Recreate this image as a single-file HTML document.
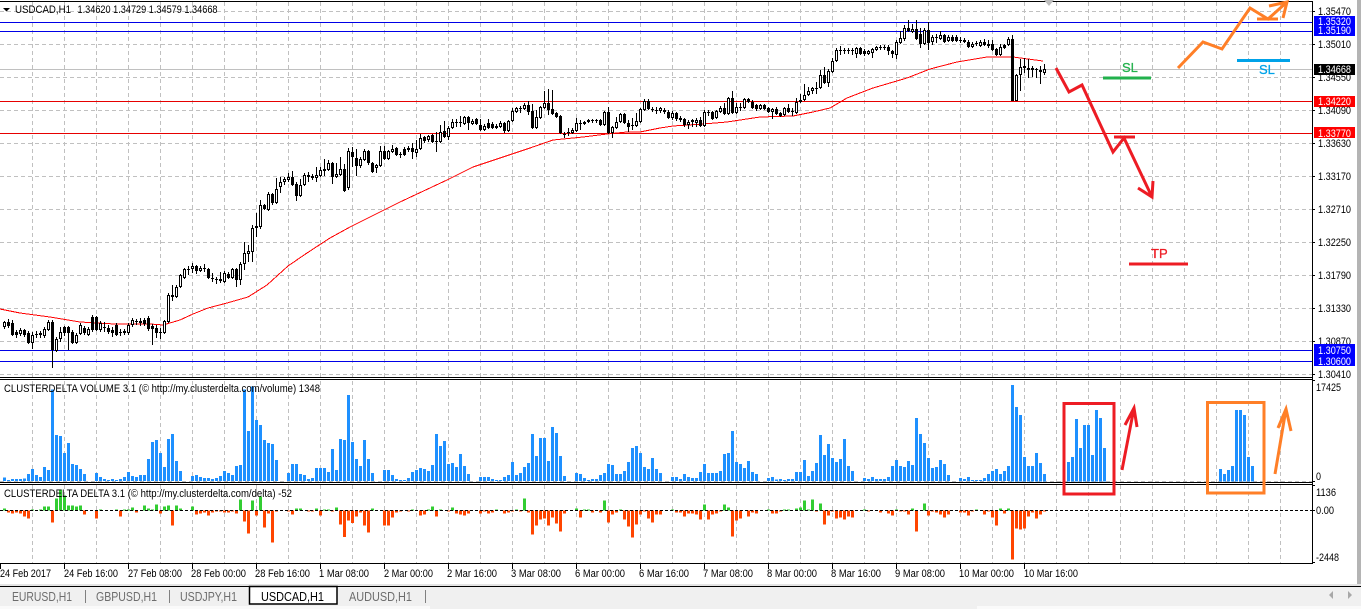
<!DOCTYPE html>
<html><head><meta charset="utf-8"><title>USDCAD,H1</title>
<style>html,body{margin:0;padding:0;background:#fff;width:1361px;height:609px;overflow:hidden}svg{display:block}text{font-family:"Liberation Sans",sans-serif;font-size:11px;fill:#000}.s{font-size:12.5px;fill:#6d6d6d}.w{fill:#fff}</style></head><body>
<svg width="1361" height="609" viewBox="0 0 1361 609" xmlns="http://www.w3.org/2000/svg">
<rect width="1361" height="609" fill="#fff"/>
<rect x="1357" y="0" width="4" height="585" fill="#b4b4b4"/>
<rect x="0" y="584" width="1361" height="2" fill="#e4e4e4"/>
<rect x="0" y="587" width="1361" height="20" fill="#f0f0f0"/>
<rect x="0" y="606" width="430" height="3" fill="#fafafa"/><rect x="430" y="606" width="547" height="3" fill="#f0f0f0"/><rect x="977" y="606" width="384" height="3" fill="#fafafa"/>
<g shape-rendering="crispEdges">
<path fill="none" stroke="#c0c0c0" stroke-dasharray="4 3" d="M32.5 2V378M64.5 2V378M96.5 2V378M128.5 2V378M160.5 2V378M192.5 2V378M224.5 2V378M256.5 2V378M288.5 2V378M320.5 2V378M352.5 2V378M384.5 2V378M416.5 2V378M448.5 2V378M480.5 2V378M512.5 2V378M544.5 2V378M576.5 2V378M608.5 2V378M640.5 2V378M672.5 2V378M704.5 2V378M736.5 2V378M768.5 2V378M800.5 2V378M832.5 2V378M864.5 2V378M896.5 2V378M928.5 2V378M960.5 2V378M992.5 2V378M1024.5 2V378M1056.5 2V378M1088.5 2V378M1120.5 2V378M1152.5 2V378M1184.5 2V378M1216.5 2V378M1248.5 2V378M1280.5 2V378
M32.5 381V482M64.5 381V482M96.5 381V482M128.5 381V482M160.5 381V482M192.5 381V482M224.5 381V482M256.5 381V482M288.5 381V482M320.5 381V482M352.5 381V482M384.5 381V482M416.5 381V482M448.5 381V482M480.5 381V482M512.5 381V482M544.5 381V482M576.5 381V482M608.5 381V482M640.5 381V482M672.5 381V482M704.5 381V482M736.5 381V482M768.5 381V482M800.5 381V482M832.5 381V482M864.5 381V482M896.5 381V482M928.5 381V482M960.5 381V482M992.5 381V482M1024.5 381V482M1056.5 381V482M1088.5 381V482M1120.5 381V482M1152.5 381V482M1184.5 381V482M1216.5 381V482M1248.5 381V482M1280.5 381V482
M32.5 485V563M64.5 485V563M96.5 485V563M128.5 485V563M160.5 485V563M192.5 485V563M224.5 485V563M256.5 485V563M288.5 485V563M320.5 485V563M352.5 485V563M384.5 485V563M416.5 485V563M448.5 485V563M480.5 485V563M512.5 485V563M544.5 485V563M576.5 485V563M608.5 485V563M640.5 485V563M672.5 485V563M704.5 485V563M736.5 485V563M768.5 485V563M800.5 485V563M832.5 485V563M864.5 485V563M896.5 485V563M928.5 485V563M960.5 485V563M992.5 485V563M1024.5 485V563M1056.5 485V563M1088.5 485V563M1120.5 485V563M1152.5 485V563M1184.5 485V563M1216.5 485V563M1248.5 485V563M1280.5 485V563
M0 11.5H1312M0 44.5H1312M0 77.5H1312M0 110.5H1312M0 143.5H1312M0 176.5H1312M0 209.5H1312M0 242.5H1312M0 275.5H1312M0 308.5H1312M0 341.5H1312M0 374.5H1312M0 481.5H1312"/>
<path fill="none" stroke="#c0c0c0" d="M0 69.5H1312"/>
<path fill="none" stroke="#0000e6" d="M0 22.5H1312M0 31.5H1312M0 350.5H1312M0 361.5H1312"/>
<path fill="none" stroke="#e60000" d="M0 101.5H1312M0 133.5H1312"/>
</g>
<path fill="none" stroke="#f00" stroke-width="1" shape-rendering="crispEdges" d="M0 309L20 313L50 317L80 322L115 324L150 324L163 325L180 320L193 314L208 308L227 303L248 297L267 285L288 266L307 253L330 238L350 227L400 202L447 180L473 167L503 157L530 148L553 140L583 137L607 134L627 132L640 132L660 128L673 126L703 124L727 122L760 117L793 116L813 112L830 108L847 98L873 88L907 78L930 69L957 62L987 57L1013 57L1043 61"/>
<g shape-rendering="crispEdges" fill="none">
<path stroke="#000" d="M4.5 321V329M8.5 319V328M12.5 320V336M16.5 330V338M20.5 328V336M24.5 329V337M28.5 331V344M32.5 332V349M36.5 331V338M40.5 331V338M44.5 327V338M48.5 320V331M52.5 320V368M56.5 337V352M60.5 327V342M64.5 326V336M68.5 326V350M72.5 330V344M76.5 333V344M80.5 323V335M84.5 326V335M88.5 327V336M92.5 315V332M96.5 316V331M100.5 321V332M104.5 322V332M108.5 325V334M112.5 327V337M116.5 323V336M120.5 329V336M124.5 329V335M128.5 323V335M132.5 318V327M136.5 319V325M140.5 318V326M144.5 318V326M148.5 316V331M152.5 324V345M156.5 325V338M160.5 328V339M164.5 320V334M168.5 293V323M172.5 285V301M176.5 285V298M180.5 274V288M184.5 268V279M188.5 266V275M192.5 263V273M196.5 265V274M200.5 266V272M204.5 264V272M208.5 268V279M212.5 273V282M216.5 277V284M220.5 272V283M224.5 271V283M228.5 272V279M232.5 268V279M236.5 268V287M240.5 262V285M244.5 242V270M248.5 245V262M252.5 225V262M256.5 213V237M260.5 200V229M264.5 204V210M268.5 192V211M272.5 193V205M276.5 178V204M280.5 177V193M284.5 177V185M288.5 173V182M292.5 171V186M296.5 182V201M300.5 179V197M304.5 173V186M308.5 172V182M312.5 174V180M316.5 167V182M320.5 167V177M324.5 159V176M328.5 160V171M332.5 162V184M336.5 163V178M340.5 157V176M344.5 164V192M348.5 148V190M352.5 147V167M356.5 149V176M360.5 157V168M364.5 149V161M368.5 150V165M372.5 162V173M376.5 164V173M380.5 146V167M384.5 146V160M388.5 150V160M392.5 145V153M396.5 147V156M400.5 152V158M404.5 147V156M408.5 146V152M412.5 143V159M416.5 140V157M420.5 134V150M424.5 136V143M428.5 135V142M432.5 134V143M436.5 132V152M440.5 125V143M444.5 121V138M448.5 126V140M452.5 119V129M456.5 119V127M460.5 116V127M464.5 116V125M468.5 116V130M472.5 119V125M476.5 118V125M480.5 119V131M484.5 124V131M488.5 119V129M492.5 122V129M496.5 124V129M500.5 121V128M504.5 122V133M508.5 120V132M512.5 108V122M516.5 107V113M520.5 106V113M524.5 103V110M528.5 101V115M532.5 104V129M536.5 110V129M540.5 106V119M544.5 91V109M548.5 89V115M552.5 90V115M556.5 112V118M560.5 115V134M564.5 132V138M568.5 128V136M572.5 128V134M576.5 118V132M580.5 120V130M584.5 121V125M588.5 119V123M592.5 119V123M596.5 119V123M600.5 119V126M604.5 111V126M608.5 107V134M612.5 126V138M616.5 117V129M620.5 113V123M624.5 113V124M628.5 120V132M632.5 118V130M636.5 113V127M640.5 108V123M644.5 99V111M648.5 99V110M652.5 107V112M656.5 107V114M660.5 107V113M664.5 108V114M668.5 110V119M672.5 111V120M676.5 112V121M680.5 116V122M684.5 118V127M688.5 120V129M692.5 119V127M696.5 118V127M700.5 117V127M704.5 110V127M708.5 110V116M712.5 111V120M716.5 110V119M720.5 106V113M724.5 103V115M728.5 97V115M732.5 91V114M736.5 103V114M740.5 103V111M744.5 98V109M748.5 98V103M752.5 100V109M756.5 104V111M760.5 104V110M764.5 104V110M768.5 107V113M772.5 108V119M776.5 107V115M780.5 112V117M784.5 107V116M788.5 104V113M792.5 108V116M796.5 98V114M800.5 94V103M804.5 84V101M808.5 87V96M812.5 87V94M816.5 82V94M820.5 70V89M824.5 67V84M828.5 69V87M832.5 58V73M836.5 48V62M840.5 46V55M844.5 48V54M848.5 48V54M852.5 48V55M856.5 47V58M860.5 47V55M864.5 49V56M868.5 50V55M872.5 48V58M876.5 46V51M880.5 45V50M884.5 45V50M888.5 45V55M892.5 50V58M896.5 40V59M900.5 31V44M904.5 25V41M908.5 20V32M912.5 24V33M916.5 20V40M920.5 28V48M924.5 28V45M928.5 22V50M932.5 35V45M936.5 34V43M940.5 31V40M944.5 34V43M948.5 35V42M952.5 35V42M956.5 35V42M960.5 37V43M964.5 38V43M968.5 40V48M972.5 42V48M976.5 41V46M980.5 40V47M984.5 39V46M988.5 40V48M992.5 40V51M996.5 48V56M1000.5 44V56M1004.5 44V49M1008.5 37V46M1012.5 35V101M1016.5 74V101M1020.5 59V91M1024.5 58V73M1028.5 59V78M1032.5 66V77M1036.5 68V78M1040.5 66V84M1044.5 64V75"/>
<path stroke="#000" stroke-width="3" d="M4.5 322V327M8.5 322V326M12.5 323V335M16.5 332V335M20.5 330V334M24.5 330V335M28.5 333V343M32.5 335V343M36.5 334V335M40.5 333V335M44.5 329V336M48.5 322V330M52.5 322V350M56.5 339V351M60.5 332V339M64.5 327V333M68.5 327V333M72.5 332V343M76.5 335V343M80.5 325V334M84.5 328V333M88.5 329V335M92.5 317V330M96.5 317V330M100.5 323V330M104.5 327V328M108.5 328V332M112.5 330V333M116.5 325V335M120.5 332V333M124.5 331V333M128.5 325V333M132.5 320V325M136.5 321V322M140.5 321V323M144.5 320V324M148.5 318V329M152.5 326V329M156.5 328V333M160.5 332V333M164.5 321V333M168.5 295V322M172.5 295V297M176.5 287V297M180.5 275V287M184.5 269V278M188.5 269V270M192.5 266V269M196.5 266V271M200.5 268V271M204.5 268V269M208.5 269V278M212.5 278V279M216.5 279V280M220.5 279V281M224.5 273V282M228.5 274V278M232.5 269V278M236.5 269V280M240.5 264V280M244.5 253V264M248.5 251V254M252.5 228V252M256.5 226V228M260.5 205V227M264.5 205V209M268.5 194V210M272.5 194V203M276.5 189V203M280.5 182V187M284.5 179V182M288.5 177V180M292.5 177V185M296.5 184V196M300.5 185V196M304.5 175V185M308.5 175V177M312.5 176V178M316.5 175V178M320.5 170V176M324.5 169V171M328.5 163V170M332.5 163V177M336.5 174V177M340.5 169V175M344.5 169V191M348.5 151V188M352.5 152V157M356.5 158V166M360.5 159V166M364.5 151V160M368.5 151V163M372.5 163V172M376.5 165V168M380.5 151V166M384.5 151V159M388.5 151V159M392.5 149V152M396.5 148V155M400.5 154V155M404.5 149V155M408.5 148V150M412.5 148V152M416.5 149V153M420.5 138V149M424.5 137V141M428.5 136V140M432.5 135V142M436.5 141V142M440.5 132V142M444.5 131V137M448.5 128V137M452.5 122V128M456.5 122V123M460.5 122V123M464.5 117V124M468.5 117V123M472.5 121V124M476.5 119V124M480.5 125V130M484.5 126V130M488.5 123V128M492.5 124V128M496.5 126V128M500.5 123V127M504.5 123V131M508.5 121V131M512.5 111V121M516.5 108V112M520.5 108V109M524.5 105V109M528.5 105V112M532.5 111V128M536.5 117V128M540.5 107V118M544.5 103V108M548.5 103V110M552.5 109V114M556.5 113V117M560.5 116V133M564.5 134V135M568.5 132V133M572.5 130V133M576.5 123V131M580.5 123V124M584.5 122V124M588.5 120V122M592.5 120V121M596.5 120V121M600.5 120V125M604.5 112V125M608.5 112V133M612.5 127V133M616.5 122V128M620.5 114V122M624.5 114V123M628.5 123V127M632.5 125V126M636.5 121V126M640.5 109V122M644.5 101V110M648.5 101V109M652.5 109V110M656.5 110V111M660.5 108V111M664.5 110V112M668.5 112V118M672.5 113V118M676.5 113V119M680.5 118V120M684.5 119V125M688.5 122V125M692.5 120V122M696.5 120V123M700.5 120V126M704.5 112V126M708.5 112V113M712.5 112V119M716.5 111V118M720.5 108V112M724.5 108V114M728.5 98V114M732.5 98V113M736.5 107V113M740.5 107V108M744.5 99V108M748.5 99V102M752.5 102V108M756.5 105V109M760.5 105V109M764.5 105V109M768.5 108V112M772.5 109V112M776.5 109V114M780.5 113V116M784.5 108V115M788.5 108V112M792.5 111V112M796.5 102V113M800.5 100V102M804.5 95V100M808.5 91V95M812.5 88V91M816.5 88V89M820.5 75V88M824.5 75V83M828.5 71V83M832.5 61V72M836.5 50V61M840.5 50V51M844.5 50V51M848.5 50V51M852.5 50V51M856.5 48V54M860.5 48V54M864.5 51V54M868.5 51V54M872.5 49V53M876.5 47V50M880.5 47V48M884.5 47V48M888.5 47V51M892.5 51V54M896.5 42V55M900.5 38V43M904.5 28V39M908.5 28V31M912.5 29V32M916.5 29V39M920.5 34V44M924.5 30V44M928.5 30V43M932.5 37V42M936.5 37V38M940.5 35V39M944.5 35V42M948.5 37V41M952.5 37V41M956.5 37V41M960.5 40V41M964.5 40V42M968.5 42V47M972.5 44V47M976.5 43V44M980.5 42V46M984.5 42V45M988.5 44V46M992.5 44V50M996.5 49V55M1000.5 47V55M1004.5 45V48M1008.5 39V45M1012.5 39V101M1016.5 75V101M1020.5 67V75M1024.5 66V68M1028.5 68V70M1032.5 68V70M1036.5 69V70M1040.5 70V72M1044.5 69V73"/>
<path stroke="#fff" d="M4.5 323V326M20.5 331V333M32.5 336V342M44.5 330V335M48.5 323V329M56.5 340V350M60.5 333V338M76.5 336V342M80.5 326V333M88.5 330V334M100.5 324V329M128.5 326V332M132.5 321V324M164.5 322V332M168.5 296V321M176.5 288V296M180.5 276V286M184.5 270V277M192.5 267V268M200.5 269V270M224.5 274V281M232.5 270V277M240.5 265V279M244.5 254V263M248.5 252V253M252.5 229V251M260.5 206V226M268.5 195V209M276.5 190V202M280.5 183V186M284.5 180V181M288.5 178V179M300.5 186V195M304.5 176V184M316.5 176V177M320.5 171V175M328.5 164V169M336.5 175V176M340.5 170V174M348.5 152V187M360.5 160V165M364.5 152V159M376.5 166V167M380.5 152V165M388.5 152V158M392.5 150V151M416.5 150V152M420.5 139V148M428.5 137V139M440.5 133V141M448.5 129V136M452.5 123V127M464.5 118V123M472.5 122V123M484.5 127V129M500.5 124V126M508.5 122V130M512.5 112V120M516.5 109V111M524.5 106V108M536.5 118V127M540.5 108V117M544.5 104V107M572.5 131V132M576.5 124V130M604.5 113V124M612.5 128V132M616.5 123V127M620.5 115V121M636.5 122V125M640.5 110V121M644.5 102V109M660.5 109V110M672.5 114V117M688.5 123V124M696.5 121V122M704.5 113V125M716.5 112V117M720.5 109V111M728.5 99V113M736.5 108V112M744.5 100V107M760.5 106V108M772.5 110V111M784.5 109V114M796.5 103V112M804.5 96V99M808.5 92V94M812.5 89V90M820.5 76V87M828.5 72V82M832.5 62V71M836.5 51V60M856.5 49V53M868.5 52V53M872.5 50V52M876.5 48V49M896.5 43V54M900.5 39V42M904.5 29V38M912.5 30V31M924.5 31V43M932.5 38V41M940.5 36V38M948.5 38V40M972.5 45V46M980.5 43V45M1000.5 48V54M1008.5 40V44M1016.5 76V100M1020.5 68V74M1044.5 70V72"/>
</g>
<g shape-rendering="crispEdges" fill="none" stroke-width="9">
<g transform="translate(1.5 300) scale(.33333)">
<path stroke="#1e90ff" d="M9 543V532M21 543V540M33 543V537M45 543V537M57 543V537M69 543V535M81 543V522M93 543V507M105 543V525M117 543V531M129 543V501M141 543V510M153 543V268M165 543V405M177 543V408M189 543V459M201 543V429M213 543V492M225 543V495M237 543V507M249 543V522M285 543V519M297 543V531M309 543V537M321 543V540M333 543V537M345 543V540M357 543V537M369 543V531M381 543V516M393 543V528M405 543V531M417 543V525M429 543V525M441 543V477M453 543V426M465 543V420M477 543V459M489 543V501M501 543V417M513 543V402M525 543V483M537 543V513M573 543V528M585 543V525M597 543V531M609 543V534M621 543V534M633 543V537M645 543V534M657 543V528M669 543V513M681 543V519M693 543V525M705 543V498M717 543V495M729 543V268M741 543V393M753 543V260M765 543V360M777 543V375M789 543V420M801 543V429M813 543V432M825 543V480M861 543V519M873 543V492M885 543V492M897 543V522M909 543V525M921 543V537M933 543V534M945 543V504M957 543V504M969 543V504M981 543V516M993 543V447M1005 543V510"/>
<path stroke="#32cd32" d="M9 631v-6M93 631v-3M117 631v-3M129 631v-12M141 631v-12M165 631v-36M177 631v-63M189 631v-45M201 631v-15M213 631v-15M225 631v-12M237 631v-15M297 631v-3M345 631v-3M369 631v-3M381 631v-3M393 631v-9M429 631v-15M441 631v-6M453 631v-3M465 631v-18M489 631v-12M501 631v-15M525 631v-15M537 631v-6M573 631v-12M717 631v-33M753 631v-30M777 631v-42M885 631v-6M897 631v-6M945 631v-6M969 631v-3M981 631v-3M1005 631v-9"/>
<path stroke="#ff4500" d="M21 631v6M33 631v9M45 631v6M57 631v9M69 631v18M81 631v24M153 631v37M249 631v12M285 631v24M357 631v18M405 631v6M477 631v9M513 631v46M585 631v12M597 631v9M609 631v6M621 631v15M633 631v6M645 631v3M657 631v3M669 631v6M681 631v6M693 631v3M705 631v9M729 631v33M741 631v69M765 631v15M789 631v51M801 631v9M813 631v96M825 631v3M861 631v3M873 631v12M921 631v3M933 631v3M957 631v15M993 631v3"/>
</g>
<g transform="translate(341.5 380) scale(.33333)">
<path stroke="#1e90ff" d="M-3 303V177M9 303V180M21 303V45M33 303V186M45 303V237M57 303V258M69 303V180M81 303V237M93 303V279M129 303V270M141 303V270M153 303V285M165 303V297M177 303V300M189 303V300M201 303V294M213 303V276M225 303V270M237 303V264M249 303V267M261 303V273M273 303V255M285 303V162M297 303V198M309 303V183M321 303V252M333 303V249M345 303V261M357 303V222M369 303V258M381 303V282M417 303V291M429 303V291M441 303V291M453 303V297M465 303V300M477 303V300M489 303V291M501 303V285M513 303V246M525 303V285M537 303V279M549 303V261M561 303V249M573 303V162M585 303V228M597 303V174M609 303V174M621 303V243M633 303V141M645 303V159M657 303V228M669 303V288M705 303V279M717 303V282M729 303V294M741 303V300M753 303V297M765 303V297M777 303V285M789 303V279M801 303V252M813 303V255M825 303V282M837 303V282M849 303V273M861 303V246M873 303V204M885 303V198M897 303V219M909 303V261M921 303V267M933 303V234M945 303V267M957 303V279M993 303V291M1005 303V291M1017 303V297"/>
<path stroke="#32cd32" d="M93 391v-6M213 391v-3M261 391v-3M273 391v-12M297 391v-3M333 391v-9M465 391v-3M525 391v-3M549 391v-36M705 391v-6M729 391v-3M741 391v-3M789 391v-30M837 391v-3M993 391v-3"/>
<path stroke="#ff4500" d="M-3 391v42M9 391v80M21 391v30M33 391v38M45 391v18M57 391v6M69 391v46M81 391v67M129 391v46M141 391v46M153 391v21M165 391v6M177 391v3M201 391v3M237 391v15M249 391v12M285 391v18M321 391v3M345 391v9M357 391v12M369 391v15M381 391v9M417 391v9M429 391v3M441 391v9M453 391v6M489 391v9M501 391v6M513 391v3M537 391v3M561 391v6M573 391v72M585 391v45M597 391v27M609 391v24M621 391v45M633 391v21M645 391v39M657 391v63M669 391v9M717 391v21M753 391v6M777 391v6M801 391v36M813 391v12M825 391v6M849 391v27M861 391v48M873 391v81M885 391v42M897 391v12M909 391v3M921 391v24M933 391v36M945 391v12M957 391v12M1005 391v6M1017 391v6"/>
</g>
<g transform="translate(681.5 380) scale(.33333)">
<path stroke="#1e90ff" d="M9 303V282M21 303V291M33 303V294M45 303V294M57 303V276M69 303V252M81 303V279M93 303V279M105 303V279M117 303V273M129 303V222M141 303V219M153 303V153M165 303V246M177 303V252M189 303V264M201 303V243M213 303V276M225 303V282M261 303V294M273 303V291M285 303V299M297 303V297M309 303V300M321 303V297M333 303V297M345 303V276M357 303V276M369 303V240M381 303V288M393 303V273M405 303V249M417 303V165M429 303V225M441 303V192M453 303V234M465 303V246M477 303V237M489 303V177M501 303V258M513 303V273M549 303V294M561 303V297M573 303V291M585 303V297M597 303V297M609 303V297M621 303V291M633 303V258M645 303V240M657 303V258M669 303V261M681 303V243M693 303V255M705 303V114M717 303V162M729 303V189M741 303V234M753 303V264M765 303V261M777 303V240M789 303V252M801 303V285M837 303V294M849 303V297M861 303V291M873 303V300M885 303V300M897 303V300M909 303V294M921 303V282M933 303V273M945 303V267M957 303V282M969 303V273M981 303V258"/>
<path stroke="#32cd32" d="M69 391v-18M129 391v-18M141 391v-9M261 391v-3M309 391v-3M321 391v-3M345 391v-6M357 391v-9M369 391v-30M381 391v-3M393 391v-33M417 391v-21M549 391v-3M645 391v-3M693 391v-6M729 391v-21M885 391v-3M957 391v-6M981 391v-6"/>
<path stroke="#ff4500" d="M-3 391v6M9 391v18M21 391v9M33 391v9M45 391v12M57 391v27M81 391v27M93 391v12M105 391v9M117 391v3M153 391v78M165 391v30M177 391v24M201 391v18M213 391v6M225 391v9M273 391v9M285 391v9M297 391v3M405 391v3M429 391v42M441 391v15M453 391v3M465 391v24M477 391v21M489 391v27M501 391v18M513 391v21M561 391v3M597 391v6M621 391v9M633 391v15M657 391v3M669 391v3M681 391v12M705 391v63M741 391v15M753 391v3M765 391v6M777 391v12M789 391v21M801 391v12M837 391v6M849 391v6M861 391v15M873 391v3M909 391v12M921 391v3M933 391v21M945 391v45M969 391v9"/>
</g>
<g transform="translate(1001.5 340) scale(.33333)">
<path stroke="#1e90ff" d="M33 424V135M45 424V201M57 424V225M69 424V351M81 424V378M93 424V378M105 424V339M117 424V369M129 424V402M201 424V366M213 424V351M225 424V237M237 424V324M249 424V255M261 424V255M273 424V345M285 424V210M297 424V234M309 424V324M657 424V387M669 424V402M681 424V390M693 424V378M705 424V210M717 424V210M729 424V225M741 424V351M753 424V378"/>
<path stroke="#ff4500" d="M33 511v147M45 511v54M57 511v57M69 511v54M81 511v18M93 511v6M105 511v24M117 511v12M129 511v3"/>
</g>
</g>
<g shape-rendering="crispEdges" fill="none">
<path stroke="#000" stroke-dasharray="3 2" d="M0 510.5H1312"/>
<path stroke="#000" d="M0 1.5H1312M0 377.5H1312M0 379.5H1312M0 482.5H1312M0 484.5H1312M0 563.5H1312M1312.5 1V564
M1312 11.5h3M1312 44.5h3M1312 77.5h3M1312 110.5h3M1312 143.5h3M1312 176.5h3M1312 209.5h3M1312 242.5h3M1312 275.5h3M1312 308.5h3M1312 341.5h3M1312 374.5h3M1312 380.5h3M1312 481.5h3M1312 485.5h3M1312 510.5h3M1312 562.5h3
M0.5 564v5M64.5 564v5M128.5 564v5M192.5 564v5M256.5 564v5M320.5 564v5M384.5 564v5M448.5 564v5M512.5 564v5M576.5 564v5M640.5 564v5M704.5 564v5M768.5 564v5M832.5 564v5M896.5 564v5M960.5 564v5M1024.5 564v5"/>
</g>
<path d="M3 8h7l-3.5 3.5z" fill="#000"/>
<path d="M1044 0h10l-5 6z" fill="#bdbdbd"/>
<text x="15" y="13" textLength="56" lengthAdjust="spacingAndGlyphs">USDCAD,H1</text>
<text x="77.5" y="13" textLength="140" lengthAdjust="spacingAndGlyphs">1.34620 1.34729 1.34579 1.34668</text>
<text x="4" y="392" textLength="316" lengthAdjust="spacingAndGlyphs">CLUSTERDELTA VOLUME 3.1 (© http://my.clusterdelta.com/volume) 1348</text>
<text x="4" y="497" textLength="288" lengthAdjust="spacingAndGlyphs">CLUSTERDELTA DELTA 3.1 (© http://my.clusterdelta.com/delta) -52</text>
<rect x="1314" y="16" width="41" height="20" fill="#0000ff"/>
<rect x="1314" y="96" width="41" height="11" fill="#ff0000"/>
<rect x="1314" y="127" width="41" height="11" fill="#ff0000"/>
<text x="1318" y="15" textLength="33" lengthAdjust="spacingAndGlyphs">1.35470</text>
<text class="w" x="1318" y="25" textLength="33" lengthAdjust="spacingAndGlyphs">1.35320</text>
<text class="w" x="1318" y="34" textLength="33" lengthAdjust="spacingAndGlyphs">1.35190</text>
<text x="1318" y="48" textLength="33" lengthAdjust="spacingAndGlyphs">1.35010</text>
<text x="1318" y="81" textLength="33" lengthAdjust="spacingAndGlyphs">1.34550</text>
<rect x="1314" y="64" width="41" height="11" fill="#000"/>
<text class="w" x="1318" y="73" textLength="33" lengthAdjust="spacingAndGlyphs">1.34668</text>
<text class="w" x="1318" y="105" textLength="33" lengthAdjust="spacingAndGlyphs">1.34220</text>
<text x="1318" y="114" textLength="33" lengthAdjust="spacingAndGlyphs">1.34090</text>
<text class="w" x="1318" y="137" textLength="33" lengthAdjust="spacingAndGlyphs">1.33770</text>
<text x="1318" y="147" textLength="33" lengthAdjust="spacingAndGlyphs">1.33630</text>
<text x="1318" y="180" textLength="33" lengthAdjust="spacingAndGlyphs">1.33170</text>
<text x="1318" y="213" textLength="33" lengthAdjust="spacingAndGlyphs">1.32710</text>
<text x="1318" y="246" textLength="33" lengthAdjust="spacingAndGlyphs">1.32250</text>
<text x="1318" y="279" textLength="33" lengthAdjust="spacingAndGlyphs">1.31790</text>
<text x="1318" y="312" textLength="33" lengthAdjust="spacingAndGlyphs">1.31330</text>
<text x="1318" y="345" textLength="33" lengthAdjust="spacingAndGlyphs">1.30870</text>
<rect x="1314" y="344" width="41" height="22" fill="#0000ff"/>
<text class="w" x="1318" y="354" textLength="33" lengthAdjust="spacingAndGlyphs">1.30750</text>
<text class="w" x="1318" y="365" textLength="33" lengthAdjust="spacingAndGlyphs">1.30600</text>
<text x="1318" y="378" textLength="33" lengthAdjust="spacingAndGlyphs">1.30410</text>
<text x="1316" y="391" textLength="25" lengthAdjust="spacingAndGlyphs">17425</text>
<text x="1316" y="480" textLength="5" lengthAdjust="spacingAndGlyphs">0</text>
<text x="1316" y="496" textLength="20" lengthAdjust="spacingAndGlyphs">1136</text>
<text x="1316" y="514" textLength="18" lengthAdjust="spacingAndGlyphs">0.00</text>
<text x="1316" y="561" textLength="23" lengthAdjust="spacingAndGlyphs">-2448</text>
<text x="0" y="577" textLength="51" lengthAdjust="spacingAndGlyphs">24 Feb 2017</text>
<text x="64" y="577" textLength="54" lengthAdjust="spacingAndGlyphs">24 Feb 16:00</text>
<text x="128" y="577" textLength="54" lengthAdjust="spacingAndGlyphs">27 Feb 08:00</text>
<text x="191" y="577" textLength="55" lengthAdjust="spacingAndGlyphs">28 Feb 00:00</text>
<text x="255" y="577" textLength="55" lengthAdjust="spacingAndGlyphs">28 Feb 16:00</text>
<text x="319" y="577" textLength="50" lengthAdjust="spacingAndGlyphs">1 Mar 08:00</text>
<text x="384" y="577" textLength="49" lengthAdjust="spacingAndGlyphs">2 Mar 00:00</text>
<text x="447" y="577" textLength="50" lengthAdjust="spacingAndGlyphs">2 Mar 16:00</text>
<text x="511" y="577" textLength="50" lengthAdjust="spacingAndGlyphs">3 Mar 08:00</text>
<text x="575" y="577" textLength="50" lengthAdjust="spacingAndGlyphs">6 Mar 00:00</text>
<text x="639" y="577" textLength="50" lengthAdjust="spacingAndGlyphs">6 Mar 16:00</text>
<text x="703" y="577" textLength="50" lengthAdjust="spacingAndGlyphs">7 Mar 08:00</text>
<text x="767" y="577" textLength="50" lengthAdjust="spacingAndGlyphs">8 Mar 00:00</text>
<text x="831" y="577" textLength="50" lengthAdjust="spacingAndGlyphs">8 Mar 16:00</text>
<text x="895" y="577" textLength="50" lengthAdjust="spacingAndGlyphs">9 Mar 08:00</text>
<text x="959" y="577" textLength="55" lengthAdjust="spacingAndGlyphs">10 Mar 00:00</text>
<text x="1024" y="577" textLength="54" lengthAdjust="spacingAndGlyphs">10 Mar 16:00</text>
<g fill="none" stroke-width="3" stroke-linejoin="miter">
<path stroke="#ed1c24" d="M1056 68L1069 92L1082 85L1113 152L1124 138L1152 197M1138 188L1152 197L1153 181M1114 137H1135M1122 470L1134 408M1125 425L1134 408L1137 427"/>
<path stroke="#ed1c24" d="M1129 264H1188"/>
<rect x="1064" y="403.500" width="50" height="90.500" stroke="#ed1c24"/>
<path stroke="#ff7f27" d="M1178 68L1203 42L1222 49L1250 8L1268 19L1287 2M1257 19H1278M1269 6L1287 2L1283 18M1275 474L1286 409M1278 428L1286 409L1291 431"/>
<rect x="1207.500" y="402.500" width="56.500" height="90.500" stroke="#ff7f27"/>
<path stroke="#22b14c" d="M1103 78H1151"/>
<path stroke="#00a2e8" d="M1237 60.500H1290"/>
</g>
<text x="1122" y="72" style="font-size:13px;fill:#22b14c;stroke:#22b14c;stroke-width:.3px">SL</text>
<text x="1259" y="74" style="font-size:13px;fill:#00a2e8;stroke:#00a2e8;stroke-width:.3px">SL</text>
<text x="1151" y="258" style="font-size:13px;fill:#ed1c24;stroke:#ed1c24;stroke-width:.3px">TP</text>
<path shape-rendering="crispEdges" fill="none" stroke="#000" d="M0 586.500H1361"/>
<rect x="249.500" y="586.500" width="87.500" height="17.500" fill="#fff" stroke="#000" stroke-width="1.500"/>
<path shape-rendering="crispEdges" fill="none" stroke="#808080" d="M85.500 590v13M169.500 590v13M425.500 590v13"/>
<text class="s" x="12" y="601" textLength="60" lengthAdjust="spacingAndGlyphs">EURUSD,H1</text>
<text class="s" x="96" y="601" textLength="61" lengthAdjust="spacingAndGlyphs">GBPUSD,H1</text>
<text class="s" x="180" y="601" textLength="57" lengthAdjust="spacingAndGlyphs">USDJPY,H1</text>
<text class="s" style="fill:#000" x="261" y="601" textLength="63" lengthAdjust="spacingAndGlyphs">USDCAD,H1</text>
<text class="s" x="349" y="601" textLength="63" lengthAdjust="spacingAndGlyphs">AUDUSD,H1</text>
<path d="M1333 591v8l-4-4zM1348 591v8l4-4z" fill="#a8a8a8"/>
</svg>
</body></html>
